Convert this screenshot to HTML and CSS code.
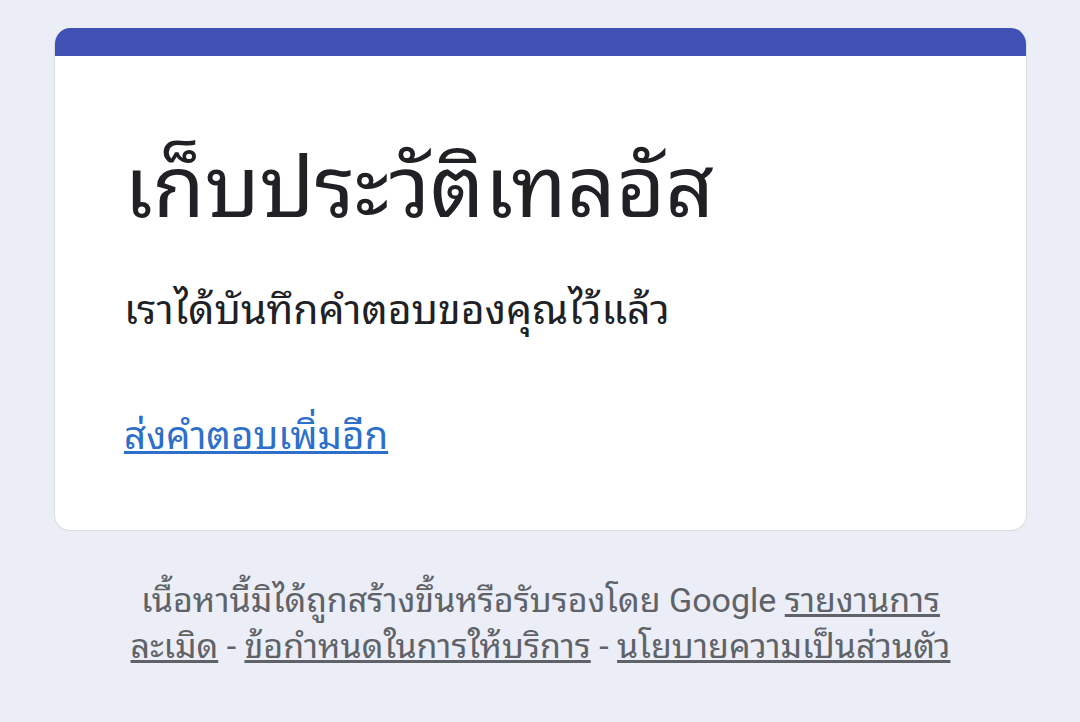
FILE: index.html
```html
<!DOCTYPE html>
<html lang="th">
<head>
<meta charset="utf-8">
<title>เก็บประวัติเทลอัส</title>
<link rel="stylesheet" href="styles.css">
</head>
<body>
<div class="page">
  <div class="card">
    <div class="card-band"></div>
    <div class="card-body">
      <h1 class="title">เก็บประวัติเทลอัส</h1>
      <p class="message">เราได้บันทึกคำตอบของคุณไว้แล้ว</p>
      <a class="again" href="#">ส่งคำตอบเพิ่มอีก</a>
    </div>
  </div>
  <div class="footer">
    เนื้อหานี้มิได้ถูกสร้างขึ้นหรือรับรองโดย Google <a href="#">รายงานการ<br>ละเมิด</a> - <a href="#">ข้อกำหนดในการให้บริการ</a> - <a href="#">นโยบายความเป็นส่วนตัว</a>
  </div>
</div>
</body>
</html>
```
FILE: styles.css
```css
html, body {
  margin: 0;
  padding: 0;
  background: #ebedf7;
  font-family: Roboto, "Noto Sans Thai Looped", sans-serif;
}
.page {
  padding: 28px 53px 0 54px;
}
.card {
  background: #fff;
  border: 1px solid #dadce0;
  border-top: none;
  border-radius: 16px;
  overflow: hidden;
}
.card-band {
  height: 28px;
  background: #3f51b5;
}
.card-body {
  padding: 84px 69px 70px;
}
.title {
  margin: 0;
  font-size: 85px;
  font-weight: 400;
  color: #202124;
  line-height: 96px;
}
.message {
  margin: 50px 0 0;
  font-size: 41px;
  line-height: 48px;
  color: #202124;
}
.again {
  display: inline-block;
  margin-top: 78px;
  font-size: 38.5px;
  line-height: 48px;
  color: #2d6fca;
}
.footer {
  padding: 46px 20px 0;
  text-align: center;
  font-size: 34px;
  line-height: 46px;
  color: #5f6368;
}
.footer a {
  color: #5f6368;
}
```
